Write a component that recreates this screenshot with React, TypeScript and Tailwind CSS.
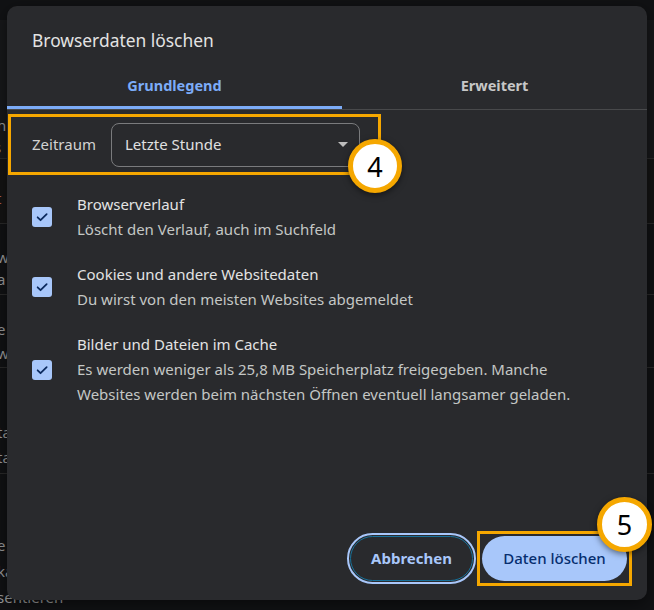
const font = "font-['Noto_Sans','Liberation_Sans',sans-serif]";

function Badge({ n, className }: { n: string; className: string }) {
  return (
    <div
      className={`absolute flex items-center justify-center rounded-full border-[5px] border-[#f5a700] bg-white text-[27px] leading-none text-black shadow-[0_2px_6px_rgba(0,0,0,0.5)] ${className}`}
    >
      {n}
    </div>
  );
}

function Check() {
  return (
    <div className="flex h-[20px] w-[20px] shrink-0 items-center justify-center rounded-[3px] bg-[#a8c7fa]">
      <svg width="14" height="14" viewBox="0 0 24 24" fill="none">
        <path d="M4.5 12.5l5 5L20 7" stroke="#0b2a5e" strokeWidth="3" strokeLinecap="round" strokeLinejoin="round" />
      </svg>
    </div>
  );
}

const items = [
  { title: "Browserverlauf", lines: ["Löscht den Verlauf, auch im Suchfeld"] },
  { title: "Cookies und andere Websitedaten", lines: ["Du wirst von den meisten Websites abgemeldet"] },
  {
    title: "Bilder und Dateien im Cache",
    lines: [
      "Es werden weniger als 25,8 MB Speicherplatz freigegeben. Manche",
      "Websites werden beim nächsten Öffnen eventuell langsamer geladen.",
    ],
  },
];

function BackgroundPage() {
  return (
    <div className="flex h-full flex-col text-[15px] text-[#9a9a9a]">
      <div className="h-[20px] bg-[#111214]" />
      <div className="flex h-[140px] flex-col bg-[#17181a] pt-[38px] leading-[22px]">
        <span className="-ml-[20px] text-[#c9a15a]">ch</span>
        <span className="-ml-[12px] mt-[34px]">on</span>
        <span className="-ml-[6px]">s</span>
      </div>
      <div className="h-[65px] border-t border-[#2a2a2a] bg-[#141414] pt-[28px]">
        <span className="-ml-[4px] text-[#b06050]">t</span>
      </div>
      <div className="flex h-[72px] flex-col border-t border-[#2a2a2a] pt-[22px] leading-[22px]">
        <span className="-ml-[3px]">w</span>
        <span className="-ml-[3px]">a</span>
      </div>
      <div className="flex h-[73px] flex-col border-t border-[#2a2a2a] pt-[22px] leading-[24px]">
        <span className="-ml-[3px]">e</span>
        <span className="-ml-[3px]">w</span>
      </div>
      <div className="flex h-[107px] flex-col border-t border-[#2a2a2a] pt-[52px] leading-[25px]">
        <span className="-ml-[3px]">ta</span>
        <span className="-ml-[3px]">ta</span>
      </div>
      <div className="flex flex-col border-t border-[#2a2a2a] pt-[58px] leading-[26px]">
        <span className="-ml-[3px]">e</span>
        <span className="-ml-[3px]">ka</span>
        <span className="-ml-[3px]">sentieren</span>
      </div>
    </div>
  );
}

export default function App() {
  return (
    <div className={`relative h-[610px] w-[654px] overflow-hidden bg-[#111214] ${font}`}>
      <BackgroundPage />
      <div className="absolute left-[7px] top-[6px] flex h-[594px] w-[640px] flex-col rounded-[10px] bg-[#292a2d] shadow-[0_4px_16px_rgba(0,0,0,0.5)]">
        <h1 className="pl-[25px] pt-[22px] text-[17.4px] leading-[24px] text-[#e3e3e3]">Browserdaten löschen</h1>

        <div className="mt-[14px] flex h-[44px] border-b border-[#48494b] text-[14.5px] font-bold">
          <div className="flex w-[335px] items-center justify-center border-b-[3px] border-[#7cacf8] text-[#7cacf8]">
            Grundlegend
          </div>
          <div className="flex flex-1 items-center justify-center pb-[3px] text-[#c7c7c7]">Erweitert</div>
        </div>

        <div className="relative ml-px mt-[4px] flex h-[61px] w-[373px] items-center border-[3px] border-[#f5a700] pl-[21px] text-[15px] text-[#d2d2d2]">
          <span>Zeitraum</span>
          <div className="ml-[15px] flex h-[44px] w-[249px] items-center justify-between rounded-[8px] border border-[#7a7b7d] pl-[13px] pr-[11px] text-[#e0e0e0]">
            <span>Letzte Stunde</span>
            <svg width="10" height="5" viewBox="0 0 10 5">
              <path d="M0 0h10L5 5z" fill="#bdbdbd" />
            </svg>
          </div>
          <Badge n="4" className="left-[337px] top-[22px] h-[54px] w-[54px]" />
        </div>

        <div className="mt-[17px] flex flex-col gap-[20px] pl-[25px]">
          {items.map((it) => (
            <div key={it.title} className="flex items-center gap-[25px]">
              <Check />
              <div className="flex flex-col text-[15px] leading-[25px]">
                <span className="text-[#e3e3e3]">{it.title}</span>
                {it.lines.map((l) => (
                  <span key={l} className="text-[#c4c7c5]">
                    {l}
                  </span>
                ))}
              </div>
            </div>
          ))}
        </div>

        <div className="mt-auto flex items-center justify-end gap-[4px] pb-[14px] pr-[15px] text-[15px]">
          <button className="h-[45px] w-[123px] rounded-full border border-[#17719a] font-bold text-[#a8c7fa] outline-2 outline-offset-1 outline-[#a8c7fa]">
            Abbrechen
          </button>
          <div className="relative border-[3px] border-[#f5a700] p-[2px]">
            <button className="h-[45px] w-[145px] rounded-full bg-[#a8c7fa] font-medium text-[#062e6f]">
              Daten löschen
            </button>
            <Badge n="5" className="-top-[37px] left-[117px] h-[55px] w-[55px]" />
          </div>
        </div>
      </div>
    </div>
  );
}
